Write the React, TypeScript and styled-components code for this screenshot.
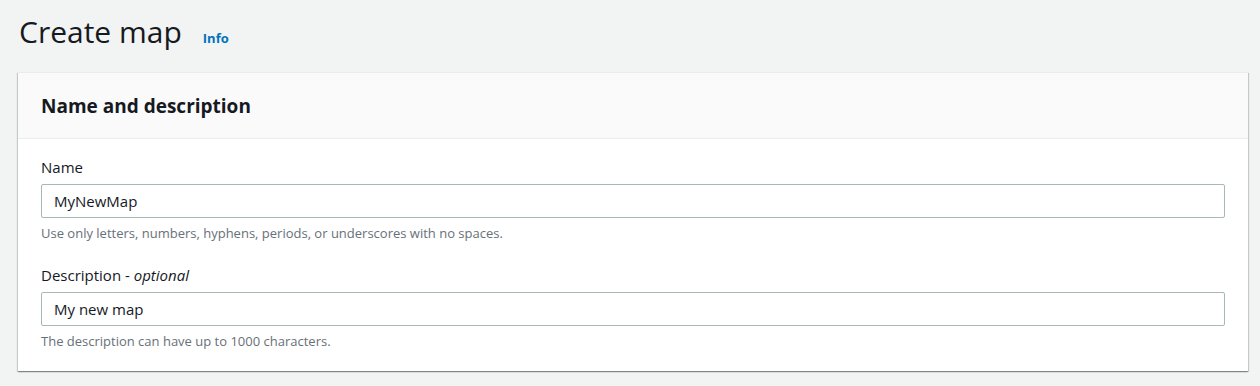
import React from "react";
import styled, { createGlobalStyle } from "styled-components";

const Global = createGlobalStyle`
  html, body { margin: 0; padding: 0; background: #f2f3f3; }
  body { font-family: "Open Sans", "Liberation Sans", sans-serif; color: #16191f; }
  * { box-sizing: border-box; }
`;

const Page = styled.div`
  width: 1260px;
  height: 386px;
  padding: 12px 12px 0 18px;
  display: flex;
  flex-direction: column;
`;

const TitleRow = styled.div`
  display: flex;
  align-items: baseline;
  gap: 21px;
  padding-left: 1px;
  height: 60px;
`;

const Title = styled.h1`
  margin: 0;
  font-size: 30px;
  font-weight: 400;
  line-height: 40px;
  color: #16191f;
`;

const InfoLink = styled.a`
  font-size: 13px;
  font-weight: 700;
  color: #0073bb;
  text-decoration: none;
`;

const Panel = styled.section`
  width: 1230px;
  background: #fff;
  box-shadow: 0 1px 1px 0 rgba(0, 28, 36, 0.3), 1px 1px 1px 0 rgba(0, 28, 36, 0.15),
    -1px 1px 1px 0 rgba(0, 28, 36, 0.15);
  border-top: 1px solid #eaeded;
`;

const PanelHeader = styled.header`
  background: #fafafa;
  border-bottom: 1px solid #eaeded;
  height: 66px;
  padding: 0 23px;
  display: flex;
  align-items: center;
`;

const PanelTitle = styled.h2`
  margin: 0;
  font-size: 19px;
  font-weight: 700;
  color: #16191f;
`;

const PanelBody = styled.div`
  padding: 17px 23px 21px;
  display: flex;
  flex-direction: column;
  gap: 22px;
`;

const Field = styled.div`
  display: flex;
  flex-direction: column;
`;

const Label = styled.label`
  font-size: 15px;
  line-height: 22px;
  color: #16191f;
  margin-bottom: 6px;
  em { font-style: italic; }
`;

const Input = styled.input`
  width: 1184px;
  height: 34px;
  border: 1px solid #aab7b8;
  border-radius: 2px;
  padding: 0 12px;
  font-family: inherit;
  font-size: 15px;
  color: #16191f;
  background: #fff;
  outline: none;
`;

const Help = styled.div`
  margin-top: 6px;
  font-size: 13px;
  line-height: 18px;
  color: #687078;
`;

export default function App() {
  return (
    <>
      <Global />
      <Page>
        <TitleRow>
          <Title>Create map</Title>
          <InfoLink href="#">Info</InfoLink>
        </TitleRow>
        <Panel>
          <PanelHeader>
            <PanelTitle>Name and description</PanelTitle>
          </PanelHeader>
          <PanelBody>
            <Field>
              <Label>Name</Label>
              <Input defaultValue="MyNewMap" />
              <Help>Use only letters, numbers, hyphens, periods, or underscores with no spaces.</Help>
            </Field>
            <Field>
              <Label>
                Description - <em>optional</em>
              </Label>
              <Input defaultValue="My new map" />
              <Help>The description can have up to 1000 characters.</Help>
            </Field>
          </PanelBody>
        </Panel>
      </Page>
    </>
  );
}
